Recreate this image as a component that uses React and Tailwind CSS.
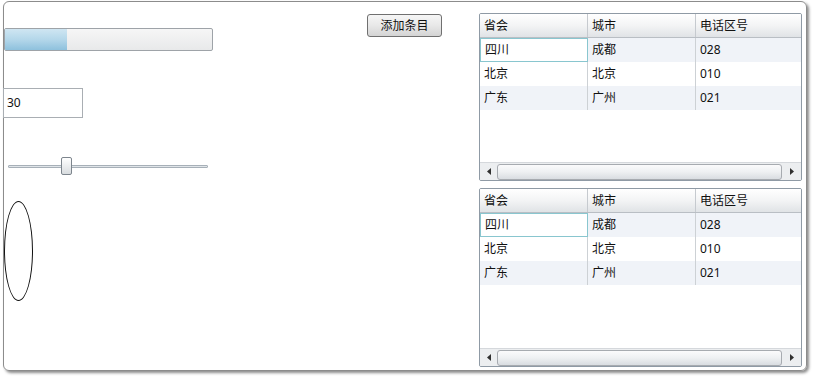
const rows = [
  ["四川", "成都", "028"],
  ["北京", "北京", "010"],
  ["广东", "广州", "021"],
];

function ScrollBar() {
  return (
    <div className="flex h-[18px] items-center border-t border-[#d5d8dc] bg-[#eceef0]">
      <div className="flex w-[17px] items-center justify-center">
        <svg width="4" height="7" viewBox="0 0 4 7">
          <path d="M4 0 L0 3.5 L4 7 Z" fill="#303030" />
        </svg>
      </div>
      <div className="h-[16px] flex-1 rounded-[3px] border border-[#a7abb0] bg-gradient-to-b from-[#fbfbfc] via-[#eef0f2] to-[#d9dde1]" />
      <div className="flex w-[19px] items-center justify-center">
        <svg width="4" height="7" viewBox="0 0 4 7">
          <path d="M0 0 L4 3.5 L0 7 Z" fill="#303030" />
        </svg>
      </div>
    </div>
  );
}

function DataGrid({ height }) {
  return (
    <div
      className={`flex flex-col overflow-hidden rounded-[2px] border border-[#8f9aa5] bg-white ${height}`}
    >
      <div className="flex h-[24px] border-b border-[#b9bec4] bg-gradient-to-b from-[#ffffff] via-[#f3f4f5] to-[#e0e3e6]">
        <div className="flex w-[108px] items-center border-r border-[#c6cacf] pl-[4px]">省会</div>
        <div className="flex w-[108px] items-center border-r border-[#c6cacf] pl-[4px]">城市</div>
        <div className="flex flex-1 items-center pl-[4px]">电话区号</div>
      </div>
      {rows.map((r, i) => (
        <div
          key={r[0]}
          className={`flex h-[24px] ${i % 2 === 0 ? "bg-[#f0f3f8]" : "bg-white"}`}
        >
          <div
            className={`flex w-[108px] items-center pl-[4px] ${
              i === 0 ? "border border-[#89c6cf] bg-white" : "border-r border-[#cdd1d5]"
            }`}
          >
            {r[0]}
          </div>
          <div className="flex w-[108px] items-center border-r border-[#cdd1d5] pl-[4px]">{r[1]}</div>
          <div className="flex flex-1 items-center pl-[4px]">{r[2]}</div>
        </div>
      ))}
      <div className="flex-1" />
      <ScrollBar />
    </div>
  );
}

export default function App() {
  return (
    <div
      className="h-[380px] w-[815px] bg-white text-[12px] text-[#111]"
      style={{ fontFamily: '"Noto Sans", "Noto Sans CJK SC", sans-serif' }}
    >
      <div className="ml-[3px] mt-[1px] flex h-[370px] w-[804px] rounded-[6px] border border-[#8c8c8c] shadow-[2px_2px_3px_rgba(0,0,0,0.45)]">
        <div className="flex w-[209px] flex-col">
          <div className="mt-[26px] flex h-[23px] overflow-hidden rounded-[2px] border border-[#9ea3a8] bg-gradient-to-b from-[#f6f6f6] to-[#e8e9ea]">
            <div className="w-[62px] bg-gradient-to-b from-[#cfe6f2] via-[#b4d7ea] to-[#8ec1dd]" />
          </div>
          <div className="-ml-[1px] mt-[37px] flex h-[30px] w-[80px] items-center border border-[#a9aeb3] pl-[3px] text-[12px]">
            30
          </div>
          <div className="relative mt-[39px] h-[18px]">
            <div className="absolute left-[4px] top-[8px] h-[3px] w-[200px] rounded-[1px] border border-[#a7b0b8] bg-[#dfe4e8]" />
            <div className="absolute left-[57px] top-0 h-[18px] w-[11px] rounded-[2px] border border-[#7d858d] bg-gradient-to-b from-[#ffffff] to-[#d8dcdf]" />
          </div>
          <div className="mt-[26px] h-[100px] w-[29px] rounded-[50%] border border-[#111]" />
        </div>
        <div className="flex-1">
          <button className="ml-[154px] mt-[12px] flex h-[23px] w-[75px] items-center justify-center rounded-[3px] border border-[#707070] bg-gradient-to-b from-[#f6f6f6] via-[#e8e8e8] to-[#d4d4d4] text-[12px]">
            添加条目
          </button>
        </div>
        <div className="mr-[4px] mt-[11px] flex w-[323px] flex-col gap-[7px]">
          <DataGrid height="h-[168px]" />
          <DataGrid height="h-[179px]" />
        </div>
      </div>
    </div>
  );
}
